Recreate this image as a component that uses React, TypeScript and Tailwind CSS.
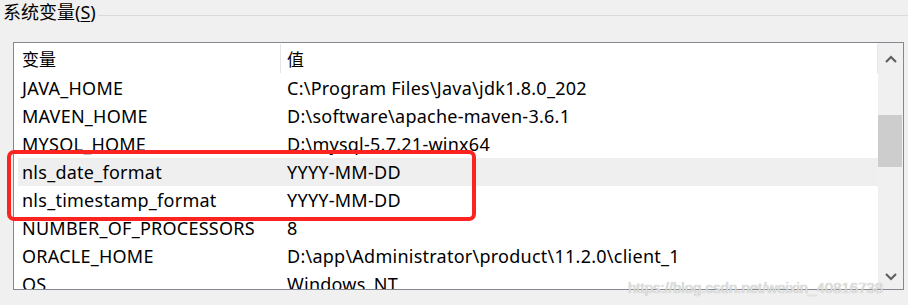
import React from "react";

const rows: [string, string][] = [
  ["JAVA_HOME", "C:\\Program Files\\Java\\jdk1.8.0_202"],
  ["MAVEN_HOME", "D:\\software\\apache-maven-3.6.1"],
  ["MYSQL_HOME", "D:\\mysql-5.7.21-winx64"],
  ["nls_date_format", "YYYY-MM-DD"],
  ["nls_timestamp_format", "YYYY-MM-DD"],
  ["NUMBER_OF_PROCESSORS", "8"],
  ["ORACLE_HOME", "D:\\app\\Administrator\\product\\11.2.0\\client_1"],
  ["OS", "Windows_NT"],
];

const font = { fontFamily: '"Noto Sans", "Noto Sans CJK SC", sans-serif' };

export default function App() {
  return (
    <div
      className="relative w-[908px] h-[305px] overflow-hidden bg-[#f0f0f0] text-[#000]"
      style={font}
    >
      <div className="flex items-center h-[29px] pl-[3px]">
        <span className="text-[18px] leading-[25px] -mt-[5px]">
          系统变量(<span className="underline underline-offset-2">S</span>)
        </span>
        <div className="flex-1 h-px bg-[#dadada] ml-[2px] mt-[1px]" />
      </div>
      <div className="ml-[13px] mt-[13px] w-[891px] h-[248px] border border-[#828790] bg-white flex overflow-hidden">
        <div className="flex-1 flex flex-col overflow-hidden">
          <div className="flex h-[31px] shrink-0 items-center">
            <div className="w-[266px] pl-[8px] text-[17px] pt-[2px]">变量</div>
            <div className="w-px h-[29px] bg-[#e5e5e5] self-start mt-[1px]" />
            <div className="flex-1 pl-[6px] text-[17px] pt-[2px]">值</div>
            <div className="w-px h-[29px] bg-[#e5e5e5] self-start mt-[1px]" />
          </div>
          <div className="flex flex-col pl-[4px]">
            {rows.map(([k, v], i) => (
              <div
                key={k}
                className={
                  "flex h-[28px] shrink-0 items-center text-[18px] tracking-[0.25px] whitespace-nowrap " +
                  (i === 3 ? "bg-[#efefef]" : "")
                }
              >
                <div className="w-[269px] pl-[4px]">{k}</div>
                <div className="flex-1">{v}</div>
              </div>
            ))}
          </div>
        </div>
        <div className="w-[25px] shrink-0 bg-[#f0f0f0] flex flex-col items-center">
          <svg width="12" height="8" viewBox="0 0 12 8" className="mt-[12px]">
            <path d="M1 7 L6 2 L11 7" fill="none" stroke="#606060" strokeWidth="2.2" />
          </svg>
          <div className="w-[24px] h-[52px] bg-[#cdcdcd] mt-[52px] self-start" />
          <div className="flex-1" />
          <svg width="12" height="8" viewBox="0 0 12 8" className="mb-[8px]">
            <path d="M1 1 L6 6 L11 1" fill="none" stroke="#606060" strokeWidth="2.2" />
          </svg>
        </div>
      </div>
      <div className="absolute left-[7px] top-[150px] w-[469px] h-[71px] border-[4px] border-[#fb2420] rounded-[7px]" />
      <div
        className="absolute left-[628px] top-[277px] text-[15px] text-[#e2e2e2] whitespace-nowrap"
        style={{ fontFamily: '"Liberation Sans", Arial, sans-serif', textShadow: "0 0 1px #a8a8a8" }}
      >
        https://blog.csdn.net/weixin_40816738
      </div>
    </div>
  );
}
